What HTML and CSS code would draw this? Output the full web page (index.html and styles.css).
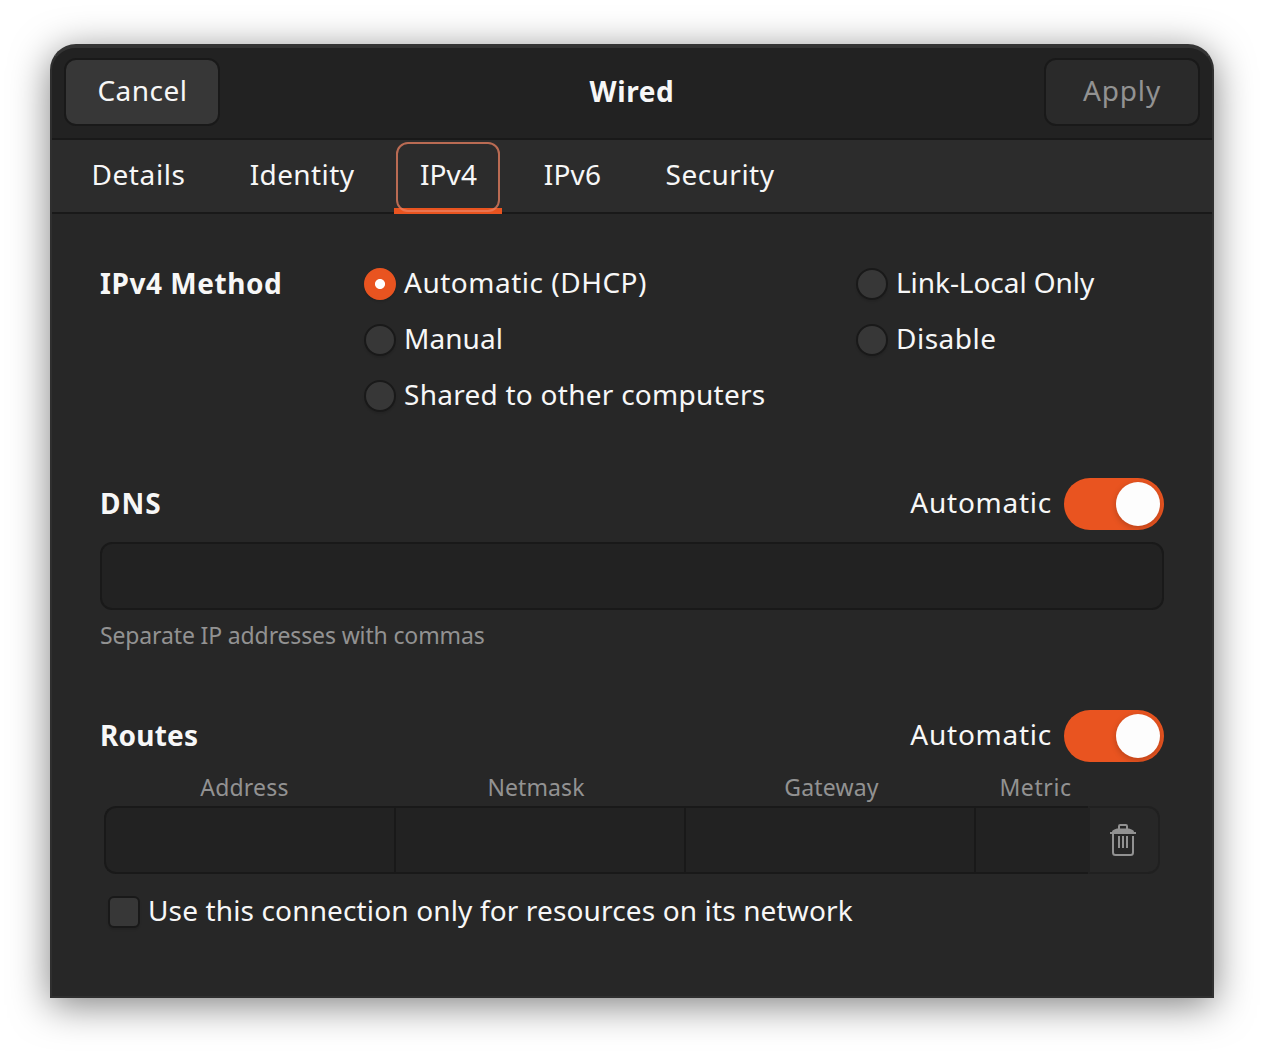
FILE: index.html
```html
<!DOCTYPE html>
<html lang="en">
<head>
<meta charset="utf-8">
<title>Wired</title>
<link rel="stylesheet" href="styles.css">
</head>
<body>
<main class="window">
  <header class="headerbar">
    <button class="button"><span class="t-cancel">Cancel</span></button>
    <h1 class="title">Wired</h1>
    <button class="button insensitive" disabled><span class="t-apply">Apply</span></button>
  </header>
  <nav class="tabs">
    <a class="tab tab-details"><span>Details</span></a>
    <a class="tab tab-identity"><span>Identity</span></a>
    <a class="tab tab-ipv4 active"><span>IPv4</span></a>
    <a class="tab tab-ipv6"><span>IPv6</span></a>
    <a class="tab tab-security"><span>Security</span></a>
  </nav>
  <div class="page">
    <section class="method">
      <h2 class="t-method">IPv4 Method</h2>
      <div class="options">
        <label class="option"><i class="radio checked"></i><span class="t-dhcp">Automatic (DHCP)</span></label>
        <label class="option"><i class="radio"></i><span class="t-manual">Manual</span></label>
        <label class="option"><i class="radio"></i><span class="t-shared">Shared to other computers</span></label>
      </div>
      <div class="options">
        <label class="option"><i class="radio"></i><span class="t-link">Link-Local Only</span></label>
        <label class="option"><i class="radio"></i><span class="t-disable">Disable</span></label>
      </div>
    </section>

    <section class="dns">
      <div class="section-head">
        <h2 class="t-dns">DNS</h2>
        <span class="t-auto">Automatic</span>
        <i class="switch"></i>
      </div>
      <div class="entry"></div>
      <p class="hint">Separate IP addresses with commas</p>
    </section>

    <section class="routes">
      <div class="section-head">
        <h2 class="t-routes">Routes</h2>
        <span class="t-auto">Automatic</span>
        <i class="switch"></i>
      </div>
      <div class="columns">
        <span class="t-address">Address</span><span class="t-netmask">Netmask</span><span class="t-gateway">Gateway</span><span class="t-metric">Metric</span>
      </div>
      <div class="route">
        <div class="cell first"></div><div class="cell"></div><div class="cell"></div><div class="cell"></div>
        <div class="delete">
          <svg width="26" height="32" viewBox="0 0 26 32" fill="none" stroke="#929292" stroke-width="2">
            <path d="M9 5V2.200Q9 1 10.200 1h5.600Q17 1 17 2.200V5"/>
            <path d="M0 8h26v2H0zM2 8c0-2 2-2.500 5-3.500h12c3 1 5 1.500 5 3.500z" fill="#929292" stroke="none"/>
            <path d="M3 10v18.500Q3 31 5.500 31h15Q23 31 23 28.500V12M9 12v12M13 12v12M17 12v12"/>
          </svg>
        </div>
      </div>
      <label class="option only"><i class="check"></i><span class="t-only">Use this connection only for resources on its network</span></label>
    </section>
  </div>
</main>
</body>
</html>
```

FILE: styles.css
```css
* { box-sizing: border-box; }
body {
  margin: 0;
  height: 1054px;
  padding: 44px 50px 56px;
  background: #fff;
  color: #f7f7f7;
  font: 28px/38px "Noto Sans", sans-serif;
  overflow: hidden;
}
h1, h2, p { margin: 0; font-size: inherit; }
h1, h2 { font-weight: 700; }
i { display: block; flex: none; }
span, h1, h2, p { white-space: nowrap; }

.window {
  width: 1164px;
  height: 954px;
  display: flex;
  flex-direction: column;
  border: 2px solid #2f2f2f;
  border-top: 4px solid #343434;
  border-radius: 26px 26px 0 0;
  background: #272727;
  box-shadow: 0 7px 38px rgba(0, 0, 0, .5);
}

.headerbar {
  height: 92px;
  flex: none;
  display: grid;
  grid-template-columns: 156px 1fr 156px;
  align-items: start;
  padding: 10px 12px 0;
  background: #222;
  border-bottom: 2px solid #191919;
  border-radius: 24px 24px 0 0;
}
.button {
  height: 68px;
  padding: 0 0 4px;
  border: 2px solid #191919;
  border-radius: 12px;
  background: #373737;
  color: inherit;
  font: inherit;
}
.button.insensitive { background: #2a2a2a; color: #929292; }
.title { padding-top: 14px; text-align: center; letter-spacing: .6px; }

.tabs {
  height: 74px;
  flex: none;
  display: flex;
  gap: 14px;
  padding-left: 14px;
  background: #2c2c2c;
  border-bottom: 2px solid #191919;
}
.tab {
  height: 74px;
  display: flex;
  align-items: center;
  justify-content: center;
  padding-bottom: 6px;
}
.tab-details { width: 144px; letter-spacing: .6px; padding-left: 1px; }
.tab-identity { width: 156px; letter-spacing: .39px; }
.tab-ipv4 { width: 108px; letter-spacing: .1px; padding-left: 1px; }
.tab-ipv6 { width: 112px; letter-spacing: .2px; padding-left: 1px; }
.tab-security { width: 156px; letter-spacing: .46px; }
.active {
  position: relative;
  background: linear-gradient(#e95420, #e95420) bottom / 100% 6px no-repeat;
}
.active::before {
  content: "";
  position: absolute;
  inset: 2px 2px 2px;
  border: 2px solid rgba(236, 130, 97, .74);
  border-radius: 12px;
}

.page { padding: 48px 48px 0; }
.method { display: flex; height: 216px; }
.method h2 { width: 264px; padding-top: 2px; }
.options { width: 492px; display: flex; flex-direction: column; gap: 16px; padding-top: 2px; }
.options:last-child { width: auto; }
.option { height: 40px; display: flex; align-items: center; gap: 8px; }
.option span { padding-bottom: 4px; }
.radio, .check {
  width: 32px;
  height: 32px;
  border: 2px solid #191919;
  border-radius: 50%;
  background: #373737;
  box-shadow: 0 2px 2px rgba(0, 0, 0, .1);
}
.radio.checked {
  border-color: #e95420;
  background: radial-gradient(circle, #fff 4.600px, #e95420 5.400px);
}
.check { border-radius: 6px; }

.section-head { height: 52px; display: flex; align-items: center; }
.section-head h2 { flex: 1; padding-bottom: 2px; }
.section-head span { padding-bottom: 4px; margin-right: 12px; }
.switch {
  width: 100px;
  height: 52px;
  padding: 4px 4px 4px 52px;
  border-radius: 26px;
  background: #e95420;
  overflow: hidden;
}
.switch::after {
  content: "";
  display: block;
  width: 44px;
  height: 44px;
  border-radius: 50%;
  background: #fdfdfd;
  box-shadow: 0 2px 6px rgba(0, 0, 0, .22);
}
.dns { height: 232px; }
.entry {
  height: 68px;
  margin-top: 12px;
  border: 2px solid #191919;
  border-radius: 12px;
  background: #222;
}
.hint, .columns { color: #929292; font-size: 23px; line-height: 32px; }
.hint { padding-top: 9px; letter-spacing: -.14px; }

.columns {
  display: grid;
  grid-template-columns: 290px 290px 290px 114px;
  padding: 9px 4px 0;
  height: 44px;
  text-align: center;
  letter-spacing: .2px;
}
.route {
  height: 68px;
  margin: 0 4px;
  display: grid;
  grid-template-columns: 290px 290px 290px 114px 72px;
}
.cell { border: 2px solid #191919; border-width: 2px 0 2px 2px; background: #222; }
.cell.first { border-radius: 12px 0 0 12px; }
.delete {
  display: flex;
  align-items: center;
  padding-left: 20px;
  border: 2px solid #202020;
  border-left-color: #222;
  border-radius: 0 12px 12px 0;
}
.only { margin: 18px 0 0 8px; }

.t-cancel { letter-spacing: .5px; padding-left: 1px; }
.t-apply { letter-spacing: .86px; }
.t-method { letter-spacing: .55px; }
.t-dhcp { letter-spacing: .51px; }
.t-manual { letter-spacing: .05px; }
.t-shared { letter-spacing: .26px; }
.t-link { letter-spacing: -.06px; }
.t-disable { letter-spacing: .5px; }
.t-dns { letter-spacing: 1px; }
.t-auto { letter-spacing: .75px; }
.t-routes { letter-spacing: .2px; }
.t-address { padding-right: 9px; }
.t-netmask { padding-right: 6px; letter-spacing: .1px; }
.t-gateway { letter-spacing: .2px; padding-left: 5px; }
.t-metric { letter-spacing: .6px; padding-left: 9px; }
.t-only { letter-spacing: .14px; }
```
